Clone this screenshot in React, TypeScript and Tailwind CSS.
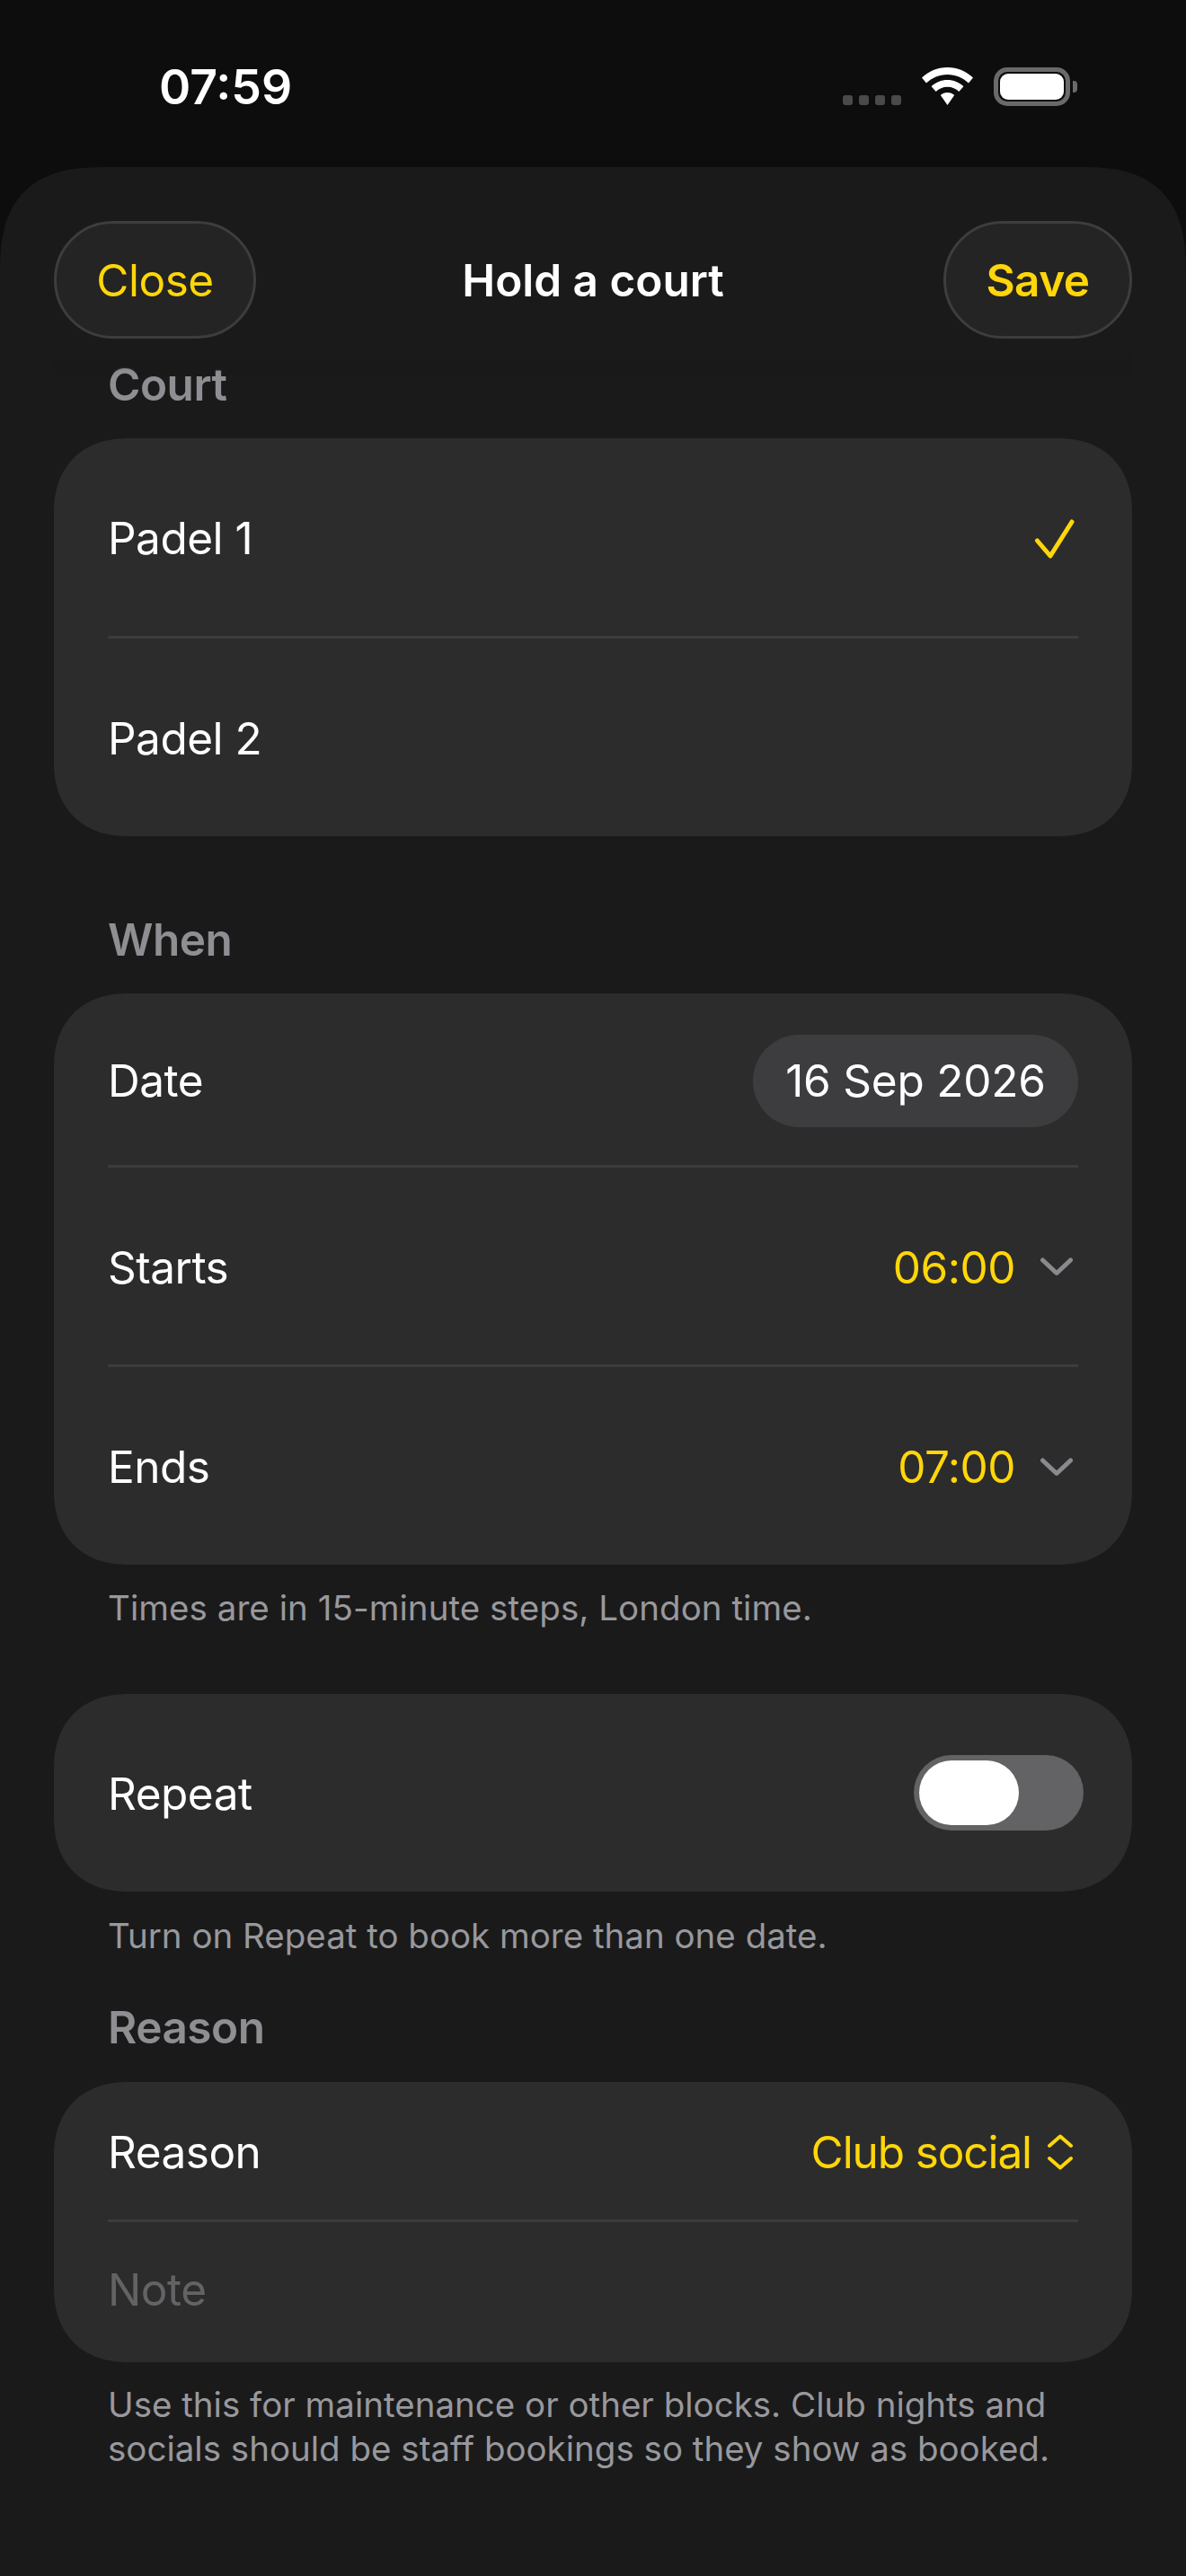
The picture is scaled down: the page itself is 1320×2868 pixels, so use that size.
import React from "react";

const Y = "text-[#FFD60A]";

function Chevron() {
  return (
    <svg width="36" height="22" viewBox="0 0 36 22" fill="none" className="ml-[28px] text-[#8a8a8e]">
      <path d="M2.5 3 L18 17.5 L33.5 3" stroke="currentColor" strokeWidth="5" strokeLinecap="round" strokeLinejoin="round" />
    </svg>
  );
}

function Divider() {
  return <div className="ml-[60px] mr-[60px] h-[3px] bg-[#3c3c3c]" />;
}

function Row({ h, children }: { h: string; children: React.ReactNode }) {
  return <div className={`flex items-center justify-between pl-[60px] pr-[60px] pt-[3px] ${h}`}>{children}</div>;
}

function Card({ children, className = "" }: { children: React.ReactNode; className?: string }) {
  return <div className={`rounded-[82px] bg-[#2c2c2c] [corner-shape:superellipse(1.15)] ${className}`}>{children}</div>;
}

function Label({ children, className }: { children: React.ReactNode; className: string }) {
  return <div className={`h-[60px] pl-[60px] text-[49.5px] leading-[60px] font-semibold text-[#8e8e93] ${className}`}>{children}</div>;
}

function Foot({ children, className }: { children: React.ReactNode; className: string }) {
  return <div className={`pl-[60px] pr-[60px] text-[38.5px] leading-[48.5px] text-[#98989d] ${className}`}>{children}</div>;
}

export default function App() {
  return (
    <div className="flex h-[2868px] w-[1320px] flex-col overflow-hidden bg-[#0d0d0d] font-['Inter',sans-serif] text-[49.5px] tracking-[-0.5px] text-white">
      <div className="relative flex h-[186px] shrink-0 items-start justify-between">
        <span className="ml-[177px] mt-[66px] text-[53.5px] leading-[62px] font-semibold tracking-normal">07:59</span>
        <div className="mr-[121px] mt-[75px] flex items-start">
          <div className="mr-[23px] mt-[31px] flex gap-[7px]">
            <div className="h-[11px] w-[11px] rounded-[3px] bg-[#4a4a4a]" />
            <div className="h-[11px] w-[11px] rounded-[3px] bg-[#4a4a4a]" />
            <div className="h-[11px] w-[11px] rounded-[3px] bg-[#4a4a4a]" />
            <div className="h-[11px] w-[11px] rounded-[3px] bg-[#4a4a4a]" />
          </div>
          <svg width="57" height="42" viewBox="0 0 57 42" fill="white" className="mr-[23px]">
            <path d="M28.5 0 C39.5 0 49.5 4.4 57 11.6 L52 17.5 C45.8 11.6 37.6 8 28.5 8 C19.4 8 11.2 11.6 5 17.5 L0 11.6 C7.5 4.4 17.5 0 28.5 0Z" />
            <path d="M28.5 14 C35.4 14 41.7 16.7 46.4 21.2 L41.3 27 C38 23.8 33.5 21.8 28.5 21.8 C23.5 21.8 19 23.8 15.7 27 L10.6 21.2 C15.3 16.7 21.6 14 28.5 14Z" />
            <path d="M28.5 28 C31.5 28 34.2 29.2 36.2 31.1 L28.5 42 L20.8 31.1 C22.8 29.2 25.5 28 28.5 28Z" />
          </svg>
          <div className="flex h-[43px] w-[85px] items-center justify-center rounded-[15px] border-[5px] border-[#6a6a6a]">
            <div className="h-[29px] w-[71px] rounded-[9px] bg-white" />
          </div>
          <div className="ml-[3px] mt-[15px] h-[13px] w-[5px] rounded-r-[4px] bg-[#6a6a6a]" />
        </div>
      </div>

      <div className="flex-1 rounded-t-[118px] bg-[#1a1a1a] [corner-shape:superellipse(1.4)]">
        <div className="grid grid-cols-[1fr_auto_1fr] items-center px-[60px] pt-[60px]">
          <div className="flex h-[131px] w-[225px] items-center justify-center rounded-full border-[3px] border-[#3d3d3d] bg-[#242424] pt-[2px] text-[#FFD60A]">Close</div>
          <div className="pt-[2px] font-semibold tracking-normal">Hold a court</div>
          <div className="flex h-[131px] w-[210px] items-center justify-center justify-self-end rounded-full border-[3px] border-[#3d3d3d] bg-[#242424] pt-[2px] font-semibold text-[#FFD60A]">Save</div>
        </div>

        <div className="px-[60px]">
          <div className="relative mt-[21px]">
            <Label className="">Court</Label>
            <div className="absolute left-0 right-0 top-[-4px] h-[24px] backdrop-blur-[1px] [mask-image:linear-gradient(black,transparent)]" />
          </div>
          <Card className="mt-[30px]">
            <Row h="h-[220px]">
              <span>Padel 1</span>
              <svg width="46" height="46" viewBox="0 0 46 46" fill="none" className={`mr-[3px] ${Y}`}>
                <path d="M3.5 25 L18 42 L42 4" stroke="currentColor" strokeWidth="5" strokeLinecap="round" strokeLinejoin="round" />
              </svg>
            </Row>
            <Divider />
            <Row h="h-[220px]"><span>Padel 2</span></Row>
          </Card>

          <div className="mt-[85px]"><Label className="">When</Label></div>
          <Card className="mt-[30px]">
            <Row h="h-[191px]">
              <span>Date</span>
              <div className="flex h-[103px] w-[362px] items-center justify-center rounded-full bg-[#3d3d3f] tracking-[-0.2px]">16 Sep 2026</div>
            </Row>
            <Divider />
            <Row h="h-[219px]">
              <span>Starts</span>
              <div className="mr-[6px] flex items-center"><span className={Y}>06:00</span><Chevron /></div>
            </Row>
            <Divider />
            <Row h="h-[220px]">
              <span>Ends</span>
              <div className="mr-[6px] flex items-center"><span className={Y}>07:00</span><Chevron /></div>
            </Row>
          </Card>
          <Foot className="mt-[24px] tracking-[0.05px]">Times are in 15-minute steps, London time.</Foot>

          <Card className="mt-[71px]">
            <Row h="h-[220px]">
              <span>Repeat</span>
              <div className="-mr-[6px] -mt-[3px] flex h-[84px] w-[189px] items-center rounded-full bg-[#636366] pl-[6px]">
                <div className="h-[72px] w-[111px] rounded-full bg-white" />
              </div>
            </Row>
          </Card>
          <Foot className="mt-[25px] tracking-normal">Turn on Repeat to book more than one date.</Foot>

          <div className="mt-[48px]"><Label className="">Reason</Label></div>
          <Card className="mt-[31px]">
            <Row h="h-[153px]">
              <span>Reason</span>
              <div className="flex items-center">
                <span className={`${Y} tracking-[-1.1px]`}>Club social</span>
                <svg width="28" height="40" viewBox="0 0 28 40" fill="none" className={`ml-[18px] mr-[6px] ${Y}`}>
                  <path d="M2 13 L14 2.5 L26 13 M2 27 L14 37.5 L26 27" stroke="currentColor" strokeWidth="4" strokeLinecap="round" strokeLinejoin="round" />
                </svg>
              </div>
            </Row>
            <Divider />
            <div className="flex h-[156px] items-center pb-[6px] pl-[60px] text-[#636366]">Note</div>
          </Card>
          <Foot className="mt-[23px] tracking-normal">
            Use this for maintenance or other blocks. Club nights and
            <br />
            socials should be staff bookings so they show as booked.
          </Foot>
        </div>
      </div>
    </div>
  );
}
